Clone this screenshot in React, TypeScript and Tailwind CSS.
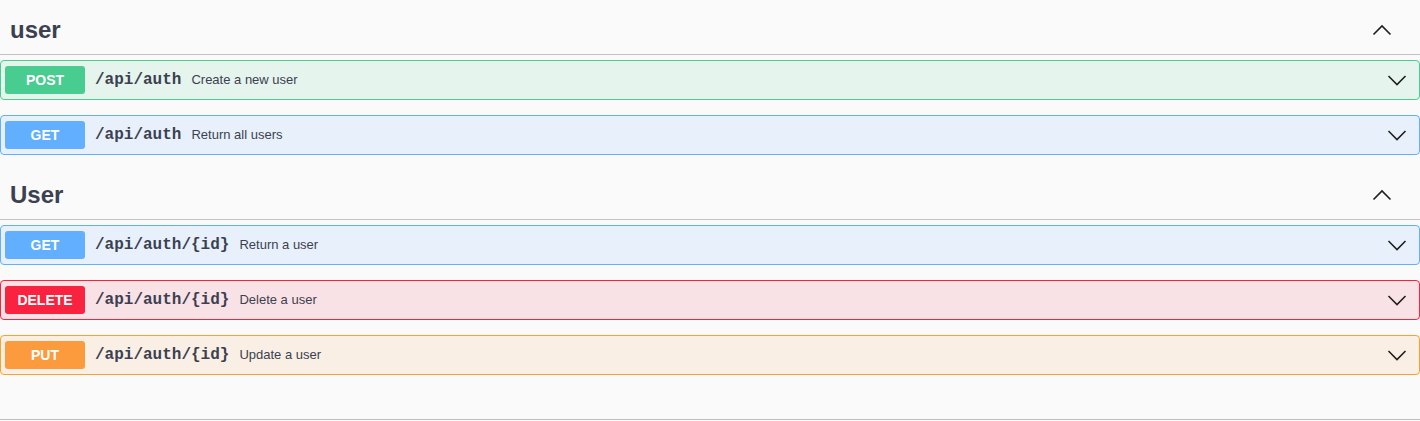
import React from "react";

type Op = {
  method: "POST" | "GET" | "DELETE" | "PUT";
  path: string;
  summary: string;
};

const methodStyles: Record<Op["method"], { box: string; badge: string }> = {
  POST: {
    box: "border-[#49cc90] bg-[#e5f4ec]",
    badge: "bg-[#49cc90]",
  },
  GET: {
    box: "border-[#61affe] bg-[#e8f1fb]",
    badge: "bg-[#61affe]",
  },
  DELETE: {
    box: "border-[#f9223f] bg-[#f9e2e5]",
    badge: "bg-[#f9223f]",
  },
  PUT: {
    box: "border-[#fca130] bg-[#f9efe5]",
    badge: "bg-[#fc9a3e]",
  },
};

const sections: { name: string; ops: Op[] }[] = [
  {
    name: "user",
    ops: [
      { method: "POST", path: "/api/auth", summary: "Create a new user" },
      { method: "GET", path: "/api/auth", summary: "Return all users" },
    ],
  },
  {
    name: "User",
    ops: [
      { method: "GET", path: "/api/auth/{id}", summary: "Return a user" },
      { method: "DELETE", path: "/api/auth/{id}", summary: "Delete a user" },
      { method: "PUT", path: "/api/auth/{id}", summary: "Update a user" },
    ],
  },
];

const Chevron = ({ up }: { up?: boolean }) => (
  <svg width="20" height="20" viewBox="0 0 20 20" className="shrink-0">
    <path
      d={up ? "M1.5 14.5L10 6l8.5 8.5" : "M1.5 6L10 14.5 18.5 6"}
      fill="none"
      stroke="#1f1f1f"
      strokeWidth="1.6"
    />
  </svg>
);

const OpBlock = ({ op }: { op: Op }) => {
  const s = methodStyles[op.method];
  return (
    <div className={`mb-[15px] rounded-[4px] border ${s.box}`}>
      <div className="flex h-[38px] items-center pl-[4px] pr-[12px]">
        <span
          className={`flex h-[28px] w-[80px] items-center justify-center rounded-[3px] text-[14px] font-bold text-white ${s.badge}`}
          style={{ fontFamily: "'Liberation Sans', Arial, sans-serif" }}
        >
          {op.method}
        </span>
        <span
          className="px-[10px] text-[16px] font-bold text-[#3b4151]"
          style={{ fontFamily: "'Liberation Mono', 'Courier New', monospace" }}
        >
          {op.path}
        </span>
        <span
          className="flex-1 text-[13px] text-[#3b4151]"
          style={{ fontFamily: "'Liberation Sans', Arial, sans-serif" }}
        >
          {op.summary}
        </span>
        <Chevron />
      </div>
    </div>
  );
};

export default function App() {
  return (
    <div className="min-h-[421px] bg-[#fafafa] pt-[5px]">
      {sections.map((sec) => (
        <div key={sec.name}>
          <div className="mb-[5px] flex h-[50px] items-center border-b border-[#c2c2c2] pl-[10px] pr-[28px]">
            <h3
              className="flex-1 text-[24px] font-bold text-[#3b4151]"
              style={{ fontFamily: "'Liberation Sans', Arial, sans-serif" }}
            >
              {sec.name}
            </h3>
            <Chevron up />
          </div>
          {sec.ops.map((op, i) => (
            <OpBlock key={i} op={op} />
          ))}
        </div>
      ))}
      <div className="mt-[30px] h-[15px] border-b border-[#bdbdbd]" />
    </div>
  );
}
